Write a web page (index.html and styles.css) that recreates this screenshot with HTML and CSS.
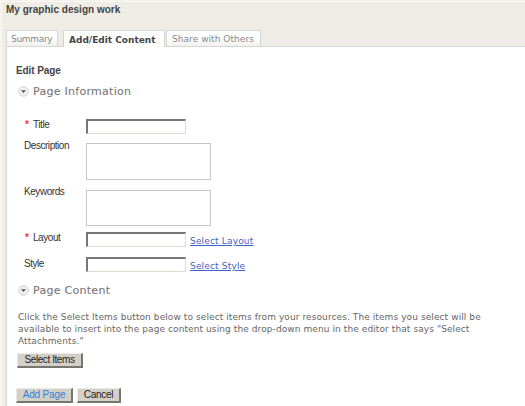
FILE: index.html
```html
<!DOCTYPE html>
<html lang="en">
<head>
<meta charset="utf-8">
<title>My graphic design work</title>
<link rel="stylesheet" href="styles.css">
</head>
<body>
<h1>My graphic design work</h1>
<nav class="tabs">
  <a class="tab summary"><span>Summary</span></a>
  <a class="tab active"><span>Add/Edit Content</span></a>
  <a class="tab share"><span>Share with Others</span></a>
</nav>
<main class="panel">
  <h2>Edit Page</h2>
  <h3 class="info"><svg class="toggle" viewBox="0 0 11 11"><circle cx="5.5" cy="5.5" r="4.8" fill="#f1f1f1" stroke="#cfcfcf"/><path d="M3 4.2h5L5.5 7z" fill="#555"/></svg><span>Page Information</span></h3>
  <form>
    <div class="row title"><label class="req"><b>*</b><span>Title</span></label><input type="text"></div>
    <div class="row area"><label>Description</label><textarea></textarea></div>
    <div class="row area keys"><label>Keywords</label><textarea></textarea></div>
    <div class="row layout"><label class="req"><b>*</b><span>Layout</span></label><input type="text"><a>Select Layout</a></div>
    <div class="row style"><label>Style</label><input type="text"><a>Select Style</a></div>
  </form>
  <h3 class="content"><svg class="toggle" viewBox="0 0 11 11"><circle cx="5.5" cy="5.5" r="4.8" fill="#f1f1f1" stroke="#cfcfcf"/><path d="M3 4.2h5L5.5 7z" fill="#555"/></svg><span>Page Content</span></h3>
  <p>Click the Select Items button below to select items from your resources. The items you select will be<br>available to insert into the page content using the drop-down menu in the editor that says "Select<br>Attachments."</p>
  <button class="items">Select Items</button>
  <div class="actions"><button class="add">Add Page</button><button class="cancel">Cancel</button></div>
</main>
</body>
</html>
```
FILE: styles.css
```css
* { box-sizing: border-box; }
body {
  margin: 0;
  height: 406px;
  overflow: hidden;
  background: #efece5;
  border-top: 1px solid #f3f0ea;
  box-shadow: inset 0 1px #fbfaf7, inset 1px 0 #f5f2ed, inset 2px 0 #faf8f5;
  font-family: "DejaVu Sans", sans-serif;
  font-size: 9px;
  color: #666;
}
h1, h2, h3, p { margin: 0; }
h1, h2 {
  font: bold 10px/12px "Liberation Sans", sans-serif;
  color: #444;
}
h1 { padding: 3px 0 0 6px; height: 29px; letter-spacing: 0.02px; }
h2 { letter-spacing: -0.1px; }
.tabs { display: flex; height: 16px; padding-left: 6px; position: relative; z-index: 1; }
.tab {
  height: 16px;
  border: 1px solid #d5d5d3;
  border-bottom: 0;
  background: linear-gradient(#fff 45%, #f3f1ed);
  color: #888;
  line-height: 16px;
  padding-left: 4px;
  white-space: nowrap;
}
.summary { width: 52px; letter-spacing: -0.3px; }
.active {
  width: 102px;
  height: 17px;
  margin: 0 1px 0 5px;
  padding-left: 5px;
  background: #fff;
  font-weight: bold;
  color: #444;
  line-height: 18px;
}
.share { width: 95px; padding-left: 5px; letter-spacing: 0.05px; }
.panel {
  margin-left: 6px;
  height: 360px;
  border: solid #d5d5d5;
  border-width: 1px 0 0 1px;
  background: #fff;
  padding: 18px 0 0 9px;
}
h3 {
  display: flex;
  align-items: center;
  height: 14px;
  padding-left: 2px;
  font-size: 11px;
  font-weight: normal;
  letter-spacing: 0.28px;
  -webkit-text-stroke: 0.1px #777;
  color: #777;
}
.toggle { width: 11px; height: 11px; margin-right: 4px; }
.info { margin-top: 7px; }
.content { margin-top: 11px; }
form { margin: 21px 0 0 8px; }
.row { display: flex; }
label {
  width: 62px;
  font: 10px/12px "Liberation Sans", sans-serif;
  letter-spacing: -0.45px;
  color: #333;
}
.req { display: flex; padding-left: 1px; }
.req b { width: 8px; color: #f33; }
.row input {
  width: 100px;
  height: 15px;
  border: 1px solid #dcdad2;
  border-top: 2px solid #777;
  border-left: 2px solid #777;
  background: #fff;
  padding: 0;
}
textarea {
  display: block;
  width: 125px;
  height: 37px;
  border: 1px solid #c8c8c8;
  resize: none;
  background: #fff;
  padding: 0;
}
.area { margin-top: 9px; }
.area label { margin-top: -3px; }
.keys { margin-top: 10px; }
.keys textarea { height: 36px; }
.keys label { margin-top: -4px; }
.layout { margin-top: 6px; }
.style { margin-top: 10px; }
.style label { padding-top: 1px; }
.row a { margin: 3px 0 0 4px; line-height: 12px; letter-spacing: 0.17px; color: #3f62c4; text-decoration: underline; }
p { margin: 15px 0 0 2px; line-height: 11.8px; letter-spacing: 0.09px; white-space: nowrap; }
button {
  display: block;
  height: 15px;
  padding: 0;
  border: 1px solid #eceae6;
  border-right: 2px solid #77756f;
  border-bottom: 2px solid #77756f;
  background: #d4d0c8;
  font: 10px/12px "Liberation Sans", sans-serif;
  color: #222;
  white-space: nowrap;
}
.items { width: 66px; margin: 6px 0 0 1px; letter-spacing: -0.42px; }
.actions { display: flex; gap: 4px; margin-top: 20px; }
.add { width: 57px; letter-spacing: -0.15px; color: #2f7fd8; }
.cancel { width: 44px; letter-spacing: -0.3px; }
```
